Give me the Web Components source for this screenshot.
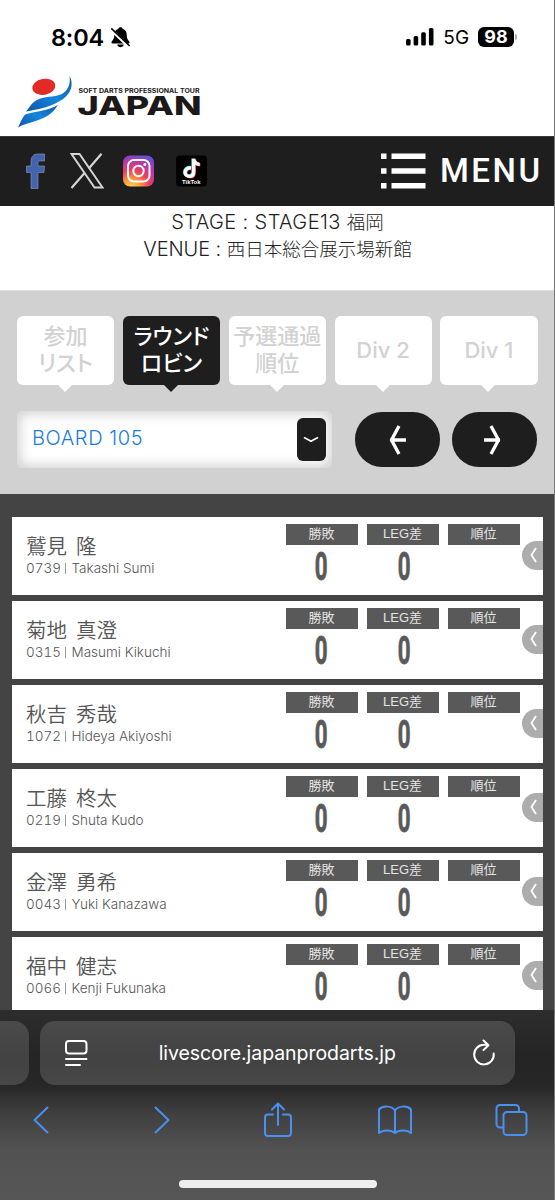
<!DOCTYPE html>
<html lang="ja">
<head>
<meta charset="utf-8">
<meta name="viewport" content="width=device-width, initial-scale=1">
<title>SOFT DARTS PROFESSIONAL TOUR JAPAN</title>
<style>
  html, body { margin: 0; }
  body {
    width: 555px;
    height: 1200px;
    overflow: hidden;
    background: #444;
    font-family: Inter, "Noto Sans CJK JP", sans-serif;
  }
  .stage { font-size: 20px; letter-spacing: 0.400px; }
  .venue { font-size: 20px; letter-spacing: -0.100px; }
</style>
</head>
<body>
<app-screen>
  <status-bar time="8:04" network="5G" battery="98"></status-bar>
  <site-logo></site-logo>
  <site-nav></site-nav>
  <stage-info>
    <div slot="stage"><span class="stage">STAGE : STAGE13 </span>福岡</div>
    <div slot="venue"><span class="venue">VENUE : </span>西日本総合展示場新館</div>
  </stage-info>
  <board-controls board="BOARD 105">
    <tab-item>参加<br>リスト</tab-item>
    <tab-item active>ラウンド<br>ロビン</tab-item>
    <tab-item>予選通過<br>順位</tab-item>
    <tab-item>Div 2</tab-item>
    <tab-item>Div 1</tab-item>
  </board-controls>
  <player-list>
    <player-card number="0739" roman="Takashi Sumi">鷲見 隆</player-card>
    <player-card number="0315" roman="Masumi Kikuchi">菊地 真澄</player-card>
    <player-card number="1072" roman="Hideya Akiyoshi">秋吉 秀哉</player-card>
    <player-card number="0219" roman="Shuta Kudo">工藤 柊太</player-card>
    <player-card number="0043" roman="Yuki Kanazawa">金澤 勇希</player-card>
    <player-card number="0066" roman="Kenji Fukunaka">福中 健志</player-card>
  </player-list>
  <browser-bar slot="browser" url="livescore.japanprodarts.jp"></browser-bar>
</app-screen>

<script>
class AppScreen extends HTMLElement {
  constructor() {
    super()
    this.attachShadow({mode: 'open'});
    this.shadowRoot.innerHTML = `
    <style>
      :host {
        display: flex;
        flex-direction: column;
        width: 555px;
        height: 1200px;
        box-sizing: border-box;
        overflow: hidden;
        border-right: 1px solid #777;
      }
      main {
        flex: 0 0 1009.5px;
        overflow: hidden;
        width: 555px;
      }
    </style>
    <main><slot></slot></main>
    <slot name="browser"></slot>
    `
  }
}

class StatusBar extends HTMLElement {
  connectedCallback() {
    this.attachShadow({mode: 'open'});
    this.shadowRoot.innerHTML = `
    <style>
      :host {
        display: flex;
        align-items: center;
        box-sizing: border-box;
        height: 72px;
        padding: 2px 38px 0 51px;
        background: #fff;
        color: #000;
      }
      .time { font-size: 23.5px; font-weight: 600; letter-spacing: -0.2px; width: 60px; }
      .bell { flex: 1; display: flex; }
      .network { font-size: 19px; margin: 0 8.500px 0 9px; letter-spacing: 0.2px; }
      .battery {
        width: 36px;
        height: 19.5px;
        border-radius: 6px;
        background: #000;
        color: #fff;
        font-size: 18px;
        font-weight: 700;
        line-height: 20px;
        text-align: center;
      }
      .nub { width: 2px; height: 6px; margin-left: 1px; border-radius: 0 2px 2px 0; background: #aaa; }
    </style>
    <span class="time">${this.getAttribute('time')}</span>
    <span class="bell">
      <svg width="19" height="21" viewBox="0 0 19 21">
        <path d="M9.500 0.300c-1.200 0-1.900.7-2.100 1.500C4.500 2.600 3.300 5 3.300 7.600c0 3.900-.9 5.200-2.400 6.600-.8.8-.5 2.200.6 2.200h16c1.100 0 1.400-1.400.6-2.200-1.500-1.400-2.400-2.700-2.400-6.600C15.700 5 14.500 2.600 11.600 1.800 11.400 1 10.700.3 9.500.3z"/>
        <path d="M6.200 17.500h6.600c-.3 1.800-1.700 2.700-3.300 2.700s-3-.9-3.300-2.700z"/>
        <path d="M-.3 2.300L17.800 19.700" stroke="#fff" stroke-width="3.200"/>
        <path d="M.8 1.800L18.200 18.500" stroke="#000" stroke-width="1.600" stroke-linecap="round"/>
      </svg>
    </span>
    <svg width="28" height="18" viewBox="0 0 28 18">
      <rect x="0" y="11" width="4.600" height="6.500" rx="1.500"/>
      <rect x="7.600" y="8" width="4.600" height="9.500" rx="1.500"/>
      <rect x="15.200" y="4.200" width="4.600" height="13.300" rx="1.500"/>
      <rect x="22.900" y="0" width="4.600" height="17.500" rx="1.500"/>
    </svg>
    <span class="network">${this.getAttribute('network')}</span>
    <span class="battery">${this.getAttribute('battery')}</span>
    <span class="nub"></span>
    `
  }
}

class SiteLogo extends HTMLElement {
  connectedCallback() {
    this.attachShadow({mode: 'open'});
    this.shadowRoot.innerHTML = `
    <style>
      :host { display: block; height: 64px; background: #fff; }
      svg { display: block; }
      text { font-family: Inter, sans-serif; font-weight: 800; fill: #1d1819; }
    </style>
    <svg width="220" height="64" viewBox="0 72 220 64">
      <defs>
        <linearGradient id="blue" x1="0" y1="1" x2="1" y2="0">
          <stop offset="0" stop-color="#0a55a8"/>
          <stop offset=".5" stop-color="#1585dd"/>
          <stop offset="1" stop-color="#0a5cab"/>
        </linearGradient>
      </defs>
      <ellipse cx="43.800" cy="86.800" rx="11.600" ry="8" transform="rotate(-10 43.800 86.800)" fill="#e32b25"/>
      <path d="M69.500 76c3.500 6 3 14-3.500 20.500-8 7.500-21 12-40 15 3.500-3.500 5.500-9.500 13-12.500 9-3.500 18-1 25-6.500 5-4 6.500-9.500 5.500-16.500z" fill="url(#blue)"/>
      <path d="M25 114.500c12-3.500 24-4 33-9.500-5 8-12 12.500-21 15.500-7.500 2.500-13.500 3.500-19 7 2-4.500 4-9 7-13z" fill="url(#blue)"/>
      <text x="78.500" y="93" font-size="6" style="font-weight: 700" textLength="121" lengthAdjust="spacingAndGlyphs">SOFT DARTS PROFESSIONAL TOUR</text>
      <text x="77.500" y="115" font-size="26" textLength="124" lengthAdjust="spacingAndGlyphs">JAPAN</text>
    </svg>
    `
  }
}

class SiteNav extends HTMLElement {
  connectedCallback() {
    this.attachShadow({mode: 'open'});
    this.shadowRoot.innerHTML = `
    <style>
      :host {
        display: flex;
        align-items: center;
        box-sizing: border-box;
        height: 69.500px;
        padding: 0 14px 0 25px;
        border-top: 1px solid #383838;
        background: #1e1e1e;
      }
      .social { display: flex; flex: 1; align-items: center; }
      .x { margin-left: 24px; }
      .insta { margin-left: 19px; }
      .tiktok { margin-left: 21.500px; }
      .menu {
        display: flex;
        align-items: center;
        gap: 14px;
        color: #fff;
        font: 500 33px/36px Roboto, sans-serif;
        letter-spacing: 2.500px;
      }
      .menu span { display: block; width: 101px; white-space: nowrap; }
      .tiktok text { font: bold 6px "Liberation Sans", sans-serif; fill: #fff; }
    </style>
    <div class="social">
      <svg width="21" height="36" viewBox="0 0 21 36">
        <path d="M6 35.500V19.500H1.500V13H6V8.500C6 3.500 8.500 1 13 1h6.500v7h-4.300C13.700 8 13 8.700 13 10v3h6.500l-.5 6.500h-6v16z" fill="#4463ad" stroke="#8f9bbd" stroke-width=".6"/>
      </svg>
      <svg class="x" width="34" height="36" viewBox="0 0 34 36" fill="none" stroke="#d5d5d5">
        <path d="M1.500 1h8L32.500 34.500h-8z" stroke-width="2"/>
        <path d="M31.500.8L18.800 15.500M15 19.500L1.500 35" stroke-width="2.200"/>
      </svg>
      <svg class="insta" width="31" height="32" viewBox="0 0 31 32">
        <defs>
          <radialGradient id="ig" cx=".28" cy="1.050" r="1.150">
            <stop offset="0" stop-color="#ffd95a"/>
            <stop offset=".25" stop-color="#fb9a3c"/>
            <stop offset=".5" stop-color="#ee3f5c"/>
            <stop offset=".75" stop-color="#b936a8"/>
            <stop offset="1" stop-color="#5b52d6"/>
          </radialGradient>
        </defs>
        <rect y=".5" width="31" height="31" rx="7" fill="url(#ig)"/>
        <g fill="none" stroke="#fff" stroke-width="2">
          <rect x="5" y="5" width="21.500" height="21.500" rx="6"/>
          <circle cx="15.500" cy="16" r="5.200"/>
        </g>
        <circle cx="21.800" cy="9.500" r="1.500" fill="#fff"/>
      </svg>
      <svg class="tiktok" width="31" height="32" viewBox="0 0 31 32">
        <rect y=".5" width="31" height="31" rx="4" fill="#000"/>
        <g fill="none" stroke-width="3.300">
          <path d="M14.500 12.500c-3.500-.3-6 1.600-6 4.400 0 2.500 1.900 4 4.200 4 2.600 0 4.300-1.700 4.300-4.400V3.500c.4 3 2.500 5.200 6 5.400" stroke="#35e5e0"/>
          <path d="M14.500 12.500c-3.500-.3-6 1.600-6 4.400 0 2.500 1.900 4 4.200 4 2.600 0 4.300-1.700 4.300-4.400V3.500c.4 3 2.500 5.200 6 5.400" stroke="#f02c56" transform="translate(1.400 1)"/>
          <path d="M14.500 12.500c-3.500-.3-6 1.600-6 4.400 0 2.500 1.900 4 4.200 4 2.600 0 4.300-1.700 4.300-4.400V3.500c.4 3 2.500 5.200 6 5.400" stroke="#fff" transform="translate(.7 .5)"/>
        </g>
        <text x="6" y="29" textLength="18.500" lengthAdjust="spacingAndGlyphs">TikTok</text>
      </svg>
    </div>
    <div class="menu">
      <svg width="45" height="36" viewBox="0 0 45 36" fill="#fff">
        <path d="M0 .5h5.500v5.500H0zM10.500 .5h34v5.500h-34zM0 15.200h5.500v5.500H0zM10.500 15.200h34v5.500h-34zM0 30h5.500v5.500H0zM10.500 30h34v5.500h-34z"/>
      </svg>
      <span>MENU</span>
    </div>
    `
  }
}

class StageInfo extends HTMLElement {
  connectedCallback() {
    this.attachShadow({mode: 'open'});
    this.shadowRoot.innerHTML = `
    <style>
      :host {
        display: flex;
        flex-direction: column;
        align-items: center;
        box-sizing: border-box;
        height: 84px;
        padding-top: 3px;
        background: #fff;
        color: #222;
        font-size: 18.500px;
        font-weight: 300;
        line-height: 27.500px;
        white-space: nowrap;
      }
    </style>
    <slot name="stage"></slot>
    <slot name="venue"></slot>
    `
  }
}

class TabItem extends HTMLElement {
  connectedCallback() {
    this.attachShadow({mode: 'open'});
    this.shadowRoot.innerHTML = `
    <style>
      :host {
        display: flex;
        flex: 1;
        position: relative;
        align-items: center;
        justify-content: center;
        height: 69.500px;
        border-radius: 6px;
        background: var(--tab-bg, #fff);
        color: #d2d2d2;
        font: 500 22px/27.500px Inter, "Noto Sans CJK JP", sans-serif;
        font-feature-settings: "palt";
        text-align: center;
        white-space: nowrap;
      }
      :host([active]) { --tab-bg: #1e1e1e; color: #fff; }
      /* small pointer under the tab */
      :host::after {
        content: "";
        position: absolute;
        top: 100%;
        left: calc(50% - 7.500px);
        border: 7.500px solid transparent;
        border-top-color: var(--tab-bg, #fff);
        border-bottom: 0;
      }
    </style>
    <div><slot></slot></div>
    `
  }
}

class BoardControls extends HTMLElement {
  connectedCallback() {
    this.attachShadow({mode: 'open'});
    this.shadowRoot.innerHTML = `
    <style>
      :host {
        display: flex;
        flex-direction: column;
        gap: 26px;
        box-sizing: border-box;
        height: 204.500px;
        padding: 25px 17.500px 0 17px;
        border-top: 1px solid #dedede;
        background: #d1d1d1;
      }
      .tabs { display: flex; gap: 8.700px; }
      .row { display: flex; align-items: center; }
      .select {
        display: flex;
        align-items: center;
        justify-content: space-between;
        box-sizing: border-box;
        width: 315px;
        height: 57px;
        padding: 0 6.500px 0 15px;
        border-radius: 6px;
        background: #fff;
        box-shadow: inset 0 0 13px 2px #ccc;
        color: #1a7be0;
        font-size: 20px;
        font-weight: 300;
      }
      .label { margin-top: -4px; letter-spacing: 0.600px; }
      .toggle, .arrow {
        display: flex;
        align-items: center;
        justify-content: center;
        padding: 0;
        border: 0;
        background: #1e1e1e;
      }
      .toggle { width: 29px; height: 43.500px; border-radius: 6px; }
      .arrow { width: 85.500px; height: 54.500px; border-radius: 27px; margin-left: 22.500px; }
      .arrow + .arrow { margin-left: 11.500px; }
      svg { fill: none; stroke: #fff; }
    </style>
    <div class="tabs"><slot></slot></div>
    <div class="row">
      <div class="select">
        <span class="label">${this.getAttribute('board')}</span>
        <button class="toggle">
          <svg width="16" height="8" viewBox="0 0 16 8"><path d="M1.500 1.800Q5 3.600 8 5.200 11 3.600 14.500 1.800" stroke-width="1.700" stroke-linecap="round"/></svg>
        </button>
      </div>
      <button class="arrow">
        <svg width="20" height="30" viewBox="0 0 20 30" stroke-width="3.300"><path d="M12 1L4.500 15 12 29M3 15h16"/></svg>
      </button>
      <button class="arrow">
        <svg width="20" height="30" viewBox="0 0 20 30" stroke-width="3.300"><path d="M7 1l7.500 14L7 29M0 15h16"/></svg>
      </button>
    </div>
    `
  }
}

class PlayerList extends HTMLElement {
  connectedCallback() {
    this.attachShadow({mode: 'open'});
    this.shadowRoot.innerHTML = `
    <style>
      :host {
        display: flex;
        flex-direction: column;
        gap: 5.500px;
        padding: 22.500px 12px 0 11.500px;
        background: #444;
      }
    </style>
    <slot></slot>
    `
  }
}

class StatCell extends HTMLElement {
  connectedCallback() {
    this.attachShadow({mode: 'open'});
    this.shadowRoot.innerHTML = `
    <style>
      :host { display: flex; flex-direction: column; align-items: center; width: 72px; }
      .head {
        width: 100%;
        height: 21px;
        background: #595959;
        color: #e4e4e4;
        font: 13px/19px "Liberation Sans", "Noto Sans CJK JP", sans-serif;
        text-align: center;
      }
      .value {
        margin-top: 1px;
        color: #595959;
        font: bold 38.500px/42px Roboto, sans-serif;
        -webkit-text-stroke: 0.800px #595959;
        transform: scaleX(0.580);
      }
      :host([offset]) .value { margin-left: 3px; }
    </style>
    <div class="head">${this.getAttribute('label')}</div>
    <div class="value"><slot></slot></div>
    `
  }
}

class PlayerCard extends HTMLElement {
  connectedCallback() {
    this.attachShadow({mode: 'open'});
    this.shadowRoot.innerHTML = `
    <style>
      :host {
        display: flex;
        box-sizing: border-box;
        height: 78.500px;
        padding: 7px 0 0 14.500px;
        background: #fff;
        color: #555;
        font-weight: 300;
      }
      .who { flex: 1; padding-top: 8px; white-space: nowrap; }
      .name { font: 350 20.500px/26px "Noto Sans CJK JP", sans-serif; word-spacing: 4.500px; }
      .meta { font-size: 13.500px; line-height: 20px; }
      .number { display: inline-block; width: 33px; font-variant-numeric: tabular-nums; }
      .bar { display: inline-block; width: 1px; height: 11px; margin: 0 5.500px 0 6px; background: #999; vertical-align: -1px; }
      .stats { display: flex; gap: 9px; }
      .more {
        display: flex;
        align-items: center;
        width: 21.500px;
        height: 29px;
        margin: 17px 0 0 2px;
        border-radius: 14.500px 0 0 14.500px;
        background: #adadad;
      }
    </style>
    <div class="who">
      <div class="name"><slot></slot></div>
      <div class="meta"><span class="number">${this.getAttribute('number')}</span><i class="bar"></i>${this.getAttribute('roman')}</div>
    </div>
    <div class="stats">
      <stat-cell label="勝敗">0</stat-cell>
      <stat-cell label="LEG差" offset>0</stat-cell>
      <stat-cell label="順位"></stat-cell>
    </div>
    <div class="more">
      <svg width="20" height="16" viewBox="0 0 20 16"><path d="M14 1L9.500 8l4.500 7" fill="none" stroke="#fff" stroke-width="1.800"/></svg>
    </div>
    `
  }
}

class BrowserBar extends HTMLElement {
  connectedCallback() {
    this.attachShadow({mode: 'open'});
    this.shadowRoot.innerHTML = `
    <style>
      :host {
        display: flex;
        flex-direction: column;
        box-sizing: border-box;
        width: 555px;
        height: 190.500px;
        padding-top: 11.500px;
        background: linear-gradient(#2d2d2d, #242424 25%, #272727 40%, #404040 55%, #525252 74%, #565656);
      }
      .tabs { display: flex; gap: 11.500px; height: 63.500px; color: #fff; }
      .prev, .address { background: linear-gradient(#4a4a4a, #424242 60%, #484848); }
      .prev { width: 28.500px; border-radius: 0 15px 15px 0; }
      .address {
        display: flex;
        align-items: center;
        box-sizing: border-box;
        width: 474.500px;
        padding: 0 19px 0 24px;
        border-radius: 15px;
      }
      .address span { flex: 1; margin-right: 5px; text-align: center; font-size: 19.500px; letter-spacing: -0.060px; }
      .tools { display: flex; align-items: center; height: 36px; margin-top: 17px; padding-left: 33px; }
      svg { fill: none; stroke: currentColor; stroke-width: 2; stroke-linecap: round; stroke-linejoin: round; }
      .tools svg { color: #4a90f0; }
      .forward { margin-left: 105px; }
      .share { margin-left: 93.500px; }
      .book { margin-left: 85px; }
      .pages { margin-left: 82.500px; }
      .home { width: 198px; height: 8px; margin: 42.500px auto 0 178.500px; border-radius: 4px; background: #eee; }
    </style>
    <div class="tabs">
      <div class="prev"></div>
      <div class="address">
        <svg width="24" height="28" viewBox="0 0 24 28"><rect x="2" y="2" width="20.500" height="12.500" rx="3"/><path d="M2 20h20.500M2 26h14"/></svg>
        <span>${this.getAttribute('url')}</span>
        <svg width="24" height="28" viewBox="0 0 24 28"><path d="M21.700 14.500a9.800 9.800 0 1 1-9.700-8.700h4M11.500 1.500l5 4.700-5 4.800"/></svg>
      </div>
    </div>
    <div class="tools">
      <svg width="16" height="28" viewBox="0 0 16 28"><path d="M14.500 1.500L1.500 14l13 12.500"/></svg>
      <svg class="forward" width="16" height="28" viewBox="0 0 16 28"><path d="M1.500 1.500l13 12.500-13 12.500"/></svg>
      <svg class="share" width="28" height="36" viewBox="0 0 28 36"><path d="M9 12.500H4a3 3 0 0 0-3 3V31a3 3 0 0 0 3 3h20a3 3 0 0 0 3-3V15.500a3 3 0 0 0-3-3h-5M14 23V2M8 7.500l6-6 6 6"/></svg>
      <svg class="book" width="36" height="30" viewBox="0 0 36 30"><path d="M18 5.500C15 1 6 0 2 4.500V28c4-3.500 12-3.500 16 0 4-3.500 12-3.500 16 0V4.500C30 0 21 1 18 5.500zV28"/></svg>
      <svg class="pages" width="33" height="32" viewBox="0 0 33 32"><path d="M8 23.500H5a3.500 3.500 0 0 1-3.500-3.500V4.500A3.500 3.500 0 0 1 5 1h15.500A3.500 3.500 0 0 1 24 4.500V7"/><rect x="8.500" y="8" width="23" height="23" rx="3.500"/></svg>
    </div>
    <div class="home"></div>
    `
  }
}

window.customElements.define("app-screen", AppScreen)
window.customElements.define("status-bar", StatusBar)
window.customElements.define("site-logo", SiteLogo)
window.customElements.define("site-nav", SiteNav)
window.customElements.define("stage-info", StageInfo)
window.customElements.define("tab-item", TabItem)
window.customElements.define("board-controls", BoardControls)
window.customElements.define("player-list", PlayerList)
window.customElements.define("stat-cell", StatCell)
window.customElements.define("player-card", PlayerCard)
window.customElements.define("browser-bar", BrowserBar)
</script>
</body>
</html>
